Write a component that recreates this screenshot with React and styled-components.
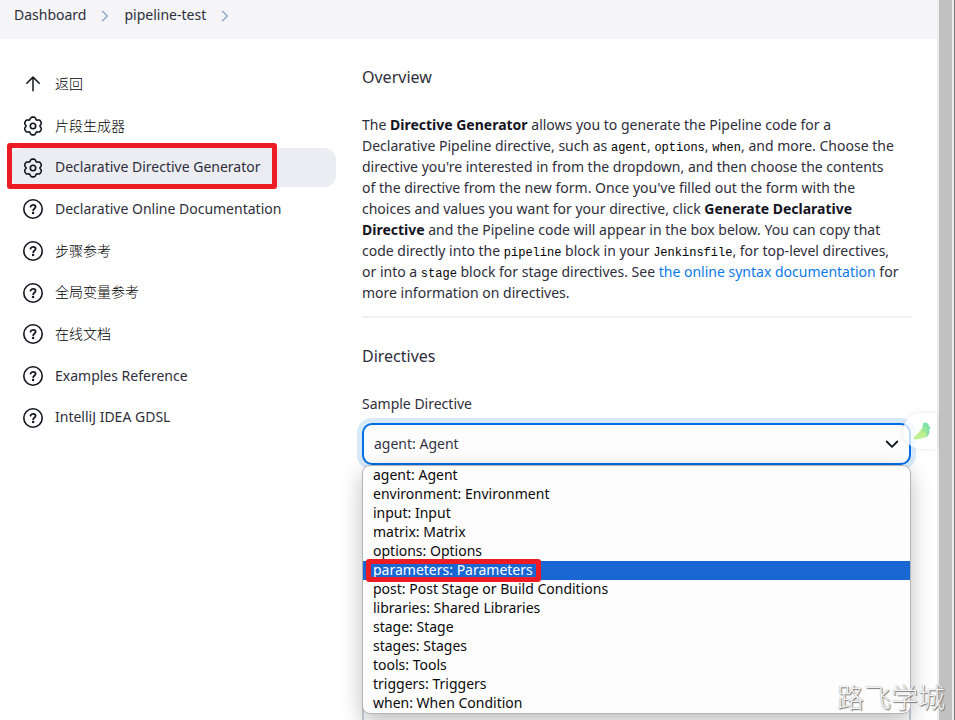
import React from "react";
import styled, { createGlobalStyle, css } from "styled-components";

const GlobalStyle = createGlobalStyle`
  * { box-sizing: border-box; }
  html, body, #root { height: 100%; }
  body {
    margin: 0;
    overflow: hidden;
    background: #fff;
    color: #2e2e3a;
    font-family: "Noto Sans", "Noto Sans CJK SC", sans-serif;
    font-size: 14px;
    line-height: 21px;
  }
`;

const Screen = styled.div`
  position: relative;
  display: flex;
  height: 100vh;
  overflow: hidden;
`;

const Page = styled.div`
  flex: 1;
  min-width: 0;
  display: flex;
  flex-direction: column;
`;

const ScrollTrack = styled.div`
  flex: none;
  width: 18px;
  padding: 0 2px;
  background: #ededed;
  border-right: 1px solid #777;
`;

const ScrollThumb = styled.div`
  height: 100%;
  background: #c1c1c1;
`;

const Breadcrumbs = styled.nav`
  flex: none;
  display: flex;
  align-items: center;
  gap: 14px;
  height: 39px;
  padding: 0 14px 11px;
  background: #f5f5f7;

  svg { margin: 3px 1px 0; color: #8fa6c4; }
`;

const Crumb = styled.a`
  color: inherit;
  text-decoration: none;
`;

const Body = styled.div`
  flex: none;
  display: flex;
  align-items: flex-start;
  gap: 26px;
  padding: 26px 26px 0 10px;
`;

const TaskList = styled.nav`
  flex: none;
  display: flex;
  flex-direction: column;
  gap: 3px;
  width: 326px;
  height: 372px;
`;

const Task = styled.a`
  position: relative;
  flex: 1;
  display: flex;
  align-items: center;
  gap: 12px;
  padding-left: 13px;
  border-radius: 12px;
  color: inherit;
  text-decoration: none;
  background: ${(p) => (p.$active ? "#ecedf3" : "transparent")};

  svg { flex: none; color: #14141f; }
`;

const TaskLabel = styled.span`
  padding-bottom: 2px;
  ${(p) => p.lang === "zh" && css`
    font-family: "Noto Sans CJK SC", sans-serif;
    font-weight: 300;
    color: #000;
  `}
`;

const mark = css`
  position: absolute;
  border: 5px solid #ed1c24;
  border-radius: 3px;
  pointer-events: none;
`;

const TaskMark = styled.span`
  ${mark}
  inset: -5px 59px -2px -3px;
`;

const Main = styled.main`
  flex: 1;
  min-width: 0;
`;

const Heading = styled.h2`
  margin: 0;
  font-size: 16px;
  font-weight: 400;
  line-height: 24px;
`;

const Intro = styled.p`
  margin: 25px 0 13px;
  white-space: nowrap;
`;

const Code = styled.code`
  font-family: "Liberation Mono", monospace;
  font-size: 12px;
  line-height: 12px;
  color: #000;
`;

const Strong = styled.strong`
  font-weight: 700;
  color: #14141f;
`;

const TextLink = styled.a`
  color: #0b7ae8;
  text-decoration: none;
`;

const Divider = styled.hr`
  height: 2px;
  margin: 0 0 26px;
  border: 0;
  background: #f1f1f8;
`;

const FieldLabel = styled.label`
  display: block;
  margin: 25px 0 9px;
`;

const Field = styled.div`
  position: relative;
`;

const SelectBox = styled.select`
  display: block;
  appearance: none;
  width: 100%;
  height: 42px;
  padding: 0 10px 2px;
  border: 2px solid #006ee6;
  border-radius: 10px;
  outline: none;
  background: #fdfdfd;
  box-shadow: 0 0 0 5px #d8eafa;
  color: #33333f;
  font: inherit;
`;

const SelectArrow = styled.span`
  position: absolute;
  top: 14px;
  right: 12px;
  display: flex;
  color: #14141f;
  pointer-events: none;
`;

const Options = styled.ul`
  position: absolute;
  top: 42px;
  left: 0;
  right: 0;
  margin: 0;
  padding: 0;
  list-style: none;
  border: 1px solid #b4b4b8;
  border-radius: 8px;
  background: #fdfdfd;
  box-shadow: 0 8px 22px rgba(0, 0, 0, 0.26);
`;

const Option = styled.li`
  height: 19px;
  padding-left: 10px;
  line-height: 18px;
  color: ${(p) => (p["aria-selected"] ? "#fff" : "#0a0a0a")};
  background: ${(p) => (p["aria-selected"] ? "#1967d2" : "transparent")};
`;

const OptionText = styled.span`
  position: relative;
  display: inline-block;
`;

const OptionMark = styled.span`
  ${mark}
  inset: -2px -8px -3px -7px;
`;

const FormPanel = styled.div`
  height: 240px;
  margin-top: 24px;
  border: 2px solid #c9d0dd;
  border-radius: 10px;
`;

const AssistantTab = styled.button`
  position: absolute;
  top: 413px;
  right: 18px;
  display: flex;
  align-items: center;
  width: 34px;
  height: 36px;
  padding: 0 0 0 10px;
  border: 0;
  border-radius: 18px 0 0 18px;
  background: rgba(255, 255, 255, 0.75);
  box-shadow: 0 0 5px rgba(0, 0, 0, 0.1);
`;

const Watermark = styled.div`
  position: absolute;
  right: 10px;
  bottom: 5px;
  font-family: "Noto Sans CJK SC", sans-serif;
  font-size: 27px;
  font-weight: 300;
  line-height: 36px;
  color: #f4f4f4;
  text-shadow: 1px 1px 1px #777, 0 0 1px #999;
`;

const gearPath = (() => {
  const points = [];
  for (let deg = 0; deg < 360; deg += 5) {
    const a = (deg * Math.PI) / 180;
    const wave = Math.cos(6 * (a - Math.PI / 2));
    const r = 8.2 + 1.0 * wave - 0.3 * Math.cos(12 * (a - Math.PI / 2));
    points.push(`${(10 + r * Math.cos(a)).toFixed(2)} ${(10 - r * Math.sin(a)).toFixed(2)}`);
  }
  return `M${points.join("L")}Z`;
})();

const iconProps = {
  width: 20,
  height: 20,
  viewBox: "0 0 20 20",
  fill: "none",
  stroke: "currentColor",
  strokeWidth: 1.6,
  strokeLinecap: "round",
  strokeLinejoin: "round",
  "aria-hidden": true,
};

const UpIcon = () => (
  <svg {...iconProps}><path d="M10 16.7V3.3M3.8 9.3L10 3.1l6.2 6.2" strokeWidth="1.5" /></svg>
);
const GearIcon = () => (
  <svg {...iconProps}><path d={gearPath} /><circle cx="10" cy="10" r="2.7" /></svg>
);
const HelpIcon = () => (
  <svg {...iconProps}>
    <circle cx="10" cy="10" r="9.2" />
    <path d="M7.5 7.7c.3-1.200 1.300-1.900 2.600-1.900 1.500 0 2.500.8 2.500 2 0 1.800-2.400 1.900-2.400 3.500" strokeWidth="1.800" />
    <circle cx="10.1" cy="14" r="1.200" fill="currentColor" stroke="none" />
  </svg>
);
const CrumbArrow = () => (
  <svg {...iconProps} width="8" height="12" viewBox="0 0 8 12"><path d="M1.5 1.2L6.3 6l-4.8 4.8" strokeWidth="1.4" /></svg>
);
const DownIcon = () => (
  <svg {...iconProps} width="14" height="14" viewBox="0 0 14 14"><path d="M1.7 4.5L7 9.8l5.3-5.3" strokeWidth="1.8" /></svg>
);
const BirdIcon = () => (
  <svg width="19" height="18" viewBox="0 0 19 18" aria-hidden="true">
    <path d="M10.5.8c3-.8 5.4.7 5.4 3.4l2 1.2-1.6 1.8c.8 4-1.2 7-4.3 8.4L8 11z" fill="#7fe0a8" />
    <path d="M11 4.5L1 15.5c-.5 1.2 0 1.8 1 1.8 7 .2 12-2.2 12.3-7.3C14.4 7.3 13.2 5.4 11 4.5z" fill="#bdf08e" />
    <path d="M11 4.5c2.6 1 3.6 3.5 3.2 6.5-2.4.2-5-1.2-5.8-3.7z" fill="#9be79b" />
  </svg>
);

const tasks = [
  { label: "返回", icon: UpIcon, lang: "zh" },
  { label: "片段生成器", icon: GearIcon, lang: "zh" },
  { label: "Declarative Directive Generator", icon: GearIcon, active: true },
  { label: "Declarative Online Documentation", icon: HelpIcon },
  { label: "步骤参考", icon: HelpIcon, lang: "zh" },
  { label: "全局变量参考", icon: HelpIcon, lang: "zh" },
  { label: "在线文档", icon: HelpIcon, lang: "zh" },
  { label: "Examples Reference", icon: HelpIcon },
  { label: "IntelliJ IDEA GDSL", icon: HelpIcon },
];

const directives = [
  "agent: Agent",
  "environment: Environment",
  "input: Input",
  "matrix: Matrix",
  "options: Options",
  "parameters: Parameters",
  "post: Post Stage or Build Conditions",
  "libraries: Shared Libraries",
  "stage: Stage",
  "stages: Stages",
  "tools: Tools",
  "triggers: Triggers",
  "when: When Condition",
];
const highlighted = "parameters: Parameters";

export default function App() {
  return (
    <Screen>
      <GlobalStyle />
      <Page>
        <Breadcrumbs aria-label="Breadcrumb">
          <Crumb href="#dashboard">Dashboard</Crumb>
          <CrumbArrow />
          <Crumb href="#pipeline-test">pipeline-test</Crumb>
          <CrumbArrow />
        </Breadcrumbs>
        <Body>
          <TaskList aria-label="Tasks">
            {tasks.map(({ label, icon: Icon, active, lang }) => (
              <Task key={label} href="#task" $active={active}>
                <Icon />
                <TaskLabel lang={lang}>{label}</TaskLabel>
                {active && <TaskMark />}
              </Task>
            ))}
          </TaskList>
          <Main>
            <Heading>Overview</Heading>
            <Intro>
              The <Strong>Directive Generator</Strong> allows you to generate the Pipeline code for a<br />
              Declarative Pipeline directive, such as <Code>agent</Code>, <Code>options</Code>, <Code>when</Code>, and more. Choose the<br />
              directive you're interested in from the dropdown, and then choose the contents<br />
              of the directive from the new form. Once you've filled out the form with the<br />
              choices and values you want for your directive, click <Strong>Generate Declarative<br />
              Directive</Strong> and the Pipeline code will appear in the box below. You can copy that<br />
              code directly into the <Code>pipeline</Code> block in your <Code>Jenkinsfile</Code>, for top-level directives,<br />
              or into a <Code>stage</Code> block for stage directives. See <TextLink href="#syntax">the online syntax documentation</TextLink> for<br />
              more information on directives.
            </Intro>
            <Divider />
            <Heading>Directives</Heading>
            <FieldLabel htmlFor="directive">Sample Directive</FieldLabel>
            <Field>
              <SelectBox id="directive" defaultValue={directives[0]}>
                {directives.map((d) => <option key={d}>{d}</option>)}
              </SelectBox>
              <SelectArrow><DownIcon /></SelectArrow>
              <Options role="listbox" aria-label="Sample Directive">
                {directives.map((d) => (
                  <Option key={d} role="option" aria-selected={d === highlighted}>
                    <OptionText>
                      {d}
                      {d === highlighted && <OptionMark />}
                    </OptionText>
                  </Option>
                ))}
              </Options>
            </Field>
            <FormPanel />
          </Main>
        </Body>
      </Page>
      <ScrollTrack><ScrollThumb /></ScrollTrack>
      <AssistantTab aria-label="Assistant"><BirdIcon /></AssistantTab>
      <Watermark>路飞学城</Watermark>
    </Screen>
  );
}
